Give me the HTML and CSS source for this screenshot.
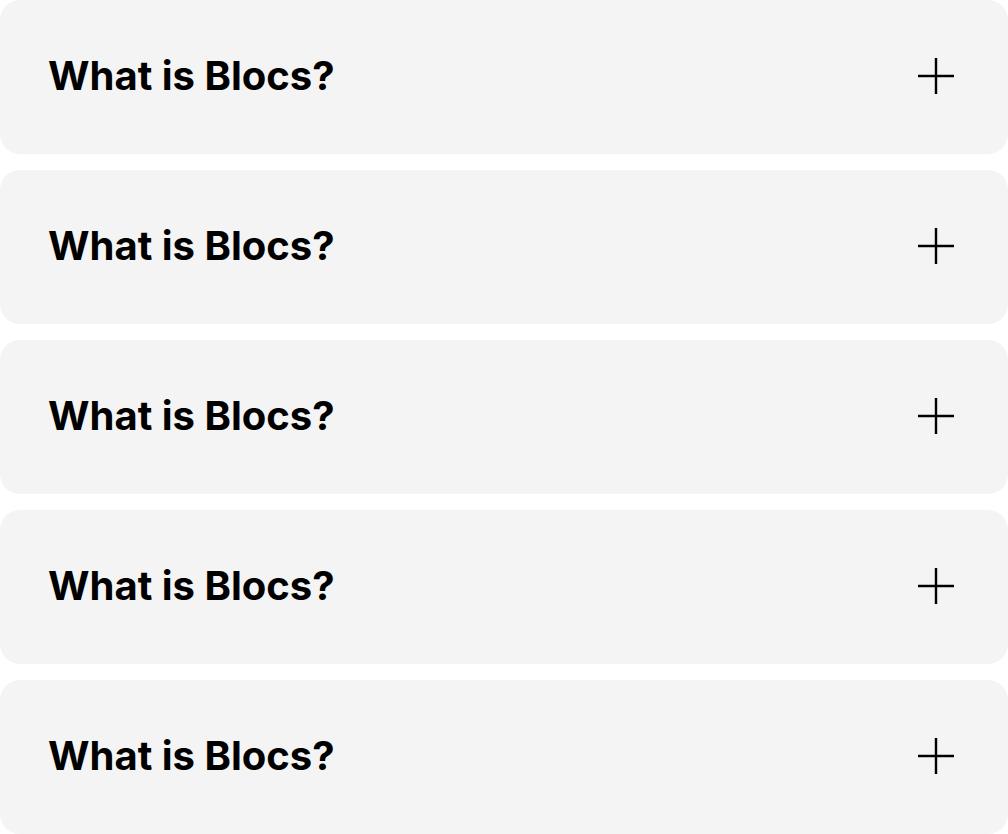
FILE: index.html
```html
<!DOCTYPE html>
<html>
<head>
<meta charset="utf-8">
<link rel="stylesheet" href="styles.css">
</head>
<body>
<div class="faq">
  <div class="item"><h3 class="q">What is Blocs?</h3><svg class="plus" viewBox="0 0 36 36"><path d="M18 0V36M0 18H36"/></svg></div>
  <div class="item"><h3 class="q">What is Blocs?</h3><svg class="plus" viewBox="0 0 36 36"><path d="M18 0V36M0 18H36"/></svg></div>
  <div class="item"><h3 class="q">What is Blocs?</h3><svg class="plus" viewBox="0 0 36 36"><path d="M18 0V36M0 18H36"/></svg></div>
  <div class="item"><h3 class="q">What is Blocs?</h3><svg class="plus" viewBox="0 0 36 36"><path d="M18 0V36M0 18H36"/></svg></div>
  <div class="item"><h3 class="q">What is Blocs?</h3><svg class="plus" viewBox="0 0 36 36"><path d="M18 0V36M0 18H36"/></svg></div>
</div>
</body>
</html>
```
FILE: styles.css
```css
html, body { margin: 0; padding: 0; background: #fff; }
body { font-family: Inter, "Noto Sans", sans-serif; }
.faq { display: flex; flex-direction: column; gap: 16px; }
.item {
  height: 154px;
  box-sizing: border-box;
  background: #f4f4f4;
  border-radius: 20px;
  display: flex;
  align-items: center;
  justify-content: space-between;
  padding: 0 54px 2px 48px;
}
.q {
  margin: 0;
  font-size: 40px;
  font-weight: 700;
  color: #000;
  letter-spacing: 0;
  line-height: 48px;
}
.plus { width: 36px; height: 36px; stroke: #000; stroke-width: 2.4; fill: none; }
```
